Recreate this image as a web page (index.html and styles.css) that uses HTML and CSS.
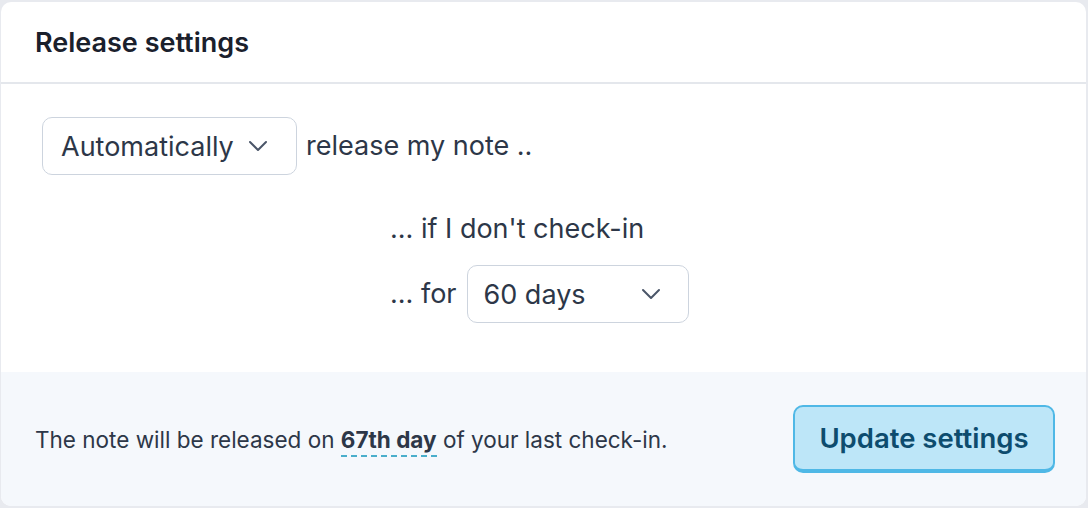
FILE: index.html
```html
<!DOCTYPE html>
<html lang="en">
  <head>
    <meta charset="UTF-8" />
    <meta name="viewport" content="width=device-width, initial-scale=1.0" />
    <title>Release settings</title>
    <link rel="stylesheet" href="styles.css">
  </head>
  <body>
    <div class="card">
      <div class="card-header">
        <h2>Release settings</h2>
      </div>

      <div class="card-body">
        <div class="row">
          <div class="select select-mode">
            <span>Automatically</span>
            <svg class="chevron" viewBox="0 0 20 12" width="20" height="12">
              <path d="M2 2l8 8 8-8" fill="none" stroke="currentColor" stroke-width="2" stroke-linecap="round" stroke-linejoin="round" />
            </svg>
          </div>
          <span class="label">release my note ..</span>
        </div>

        <div class="conditions">
          <div class="label">... if I don't check-in</div>
          <div class="row row-days">
            <span class="label">... for</span>
            <div class="select select-days">
              <span>60 days</span>
              <svg class="chevron" viewBox="0 0 20 12" width="20" height="12">
                <path d="M2 2l8 8 8-8" fill="none" stroke="currentColor" stroke-width="2" stroke-linecap="round" stroke-linejoin="round" />
              </svg>
            </div>
          </div>
        </div>
      </div>

      <div class="card-footer">
        <p class="summary">
          The note will be released on <span class="highlight">67th day</span> of your last check-in.
        </p>
        <button class="btn" type="button">Update settings</button>
      </div>
    </div>
  </body>
</html>
```

FILE: styles.css
```css
body {
  margin: 0;
  padding: 2px 2px 2px 1px;
  background: #e8eaef;
  font-family: Inter, "Noto Sans", sans-serif;
  color: #2d3748;
}
.card {
  background: #fff;
  border-radius: 10px;
  overflow: hidden;
  height: 504px;
  display: flex;
  flex-direction: column;
}
.card-header {
  height: 80px;
  border-bottom: 2px solid #e4e7ec;
  display: flex;
  align-items: center;
  padding: 0 34px;
}
.card-header h2 {
  margin: 0;
  font-size: 27px;
  font-weight: 600;
  color: #1a202c;
}
.card-body {
  flex: 1;
  padding: 33px 41px 0;
}
.row {
  display: flex;
  align-items: center;
  gap: 9px;
}
.row-days {
  gap: 10px;
}
.label {
  font-size: 27px;
  line-height: 32px;
  color: #2d3748;
}
.select {
  display: flex;
  align-items: center;
  justify-content: space-between;
  height: 58px;
  box-sizing: border-box;
  border: 1.5px solid #cdd4de;
  border-radius: 10px;
  font-size: 27px;
  color: #2d3748;
  background: #fff;
}
.select-mode {
  width: 255px;
  padding: 0 28px 0 18px;
}
.select-days {
  width: 222px;
  padding: 0 27px 0 16px;
}
.chevron {
  color: #4a5568;
}
.conditions {
  margin: 38px 0 0 348px;
  display: flex;
  flex-direction: column;
  gap: 20px;
}
.card-footer {
  height: 134px;
  background: #f5f8fc;
  display: flex;
  align-items: center;
  justify-content: space-between;
  padding: 0 31px 0 34px;
}
.summary {
  margin: 0;
  font-size: 22.5px;
  color: #2d3748;
}
.highlight {
  font-weight: 700;
  border-bottom: 2px dashed #4aaecb;
  padding-bottom: 2px;
}
.btn {
  width: 262px;
  height: 68px;
  background: #bde6f8;
  border: 2px solid #4fb8e6;
  border-bottom-width: 4px;
  border-radius: 10px;
  font-family: inherit;
  font-size: 27.5px;
  font-weight: 600;
  color: #0d4c6e;
  cursor: pointer;
}
```
